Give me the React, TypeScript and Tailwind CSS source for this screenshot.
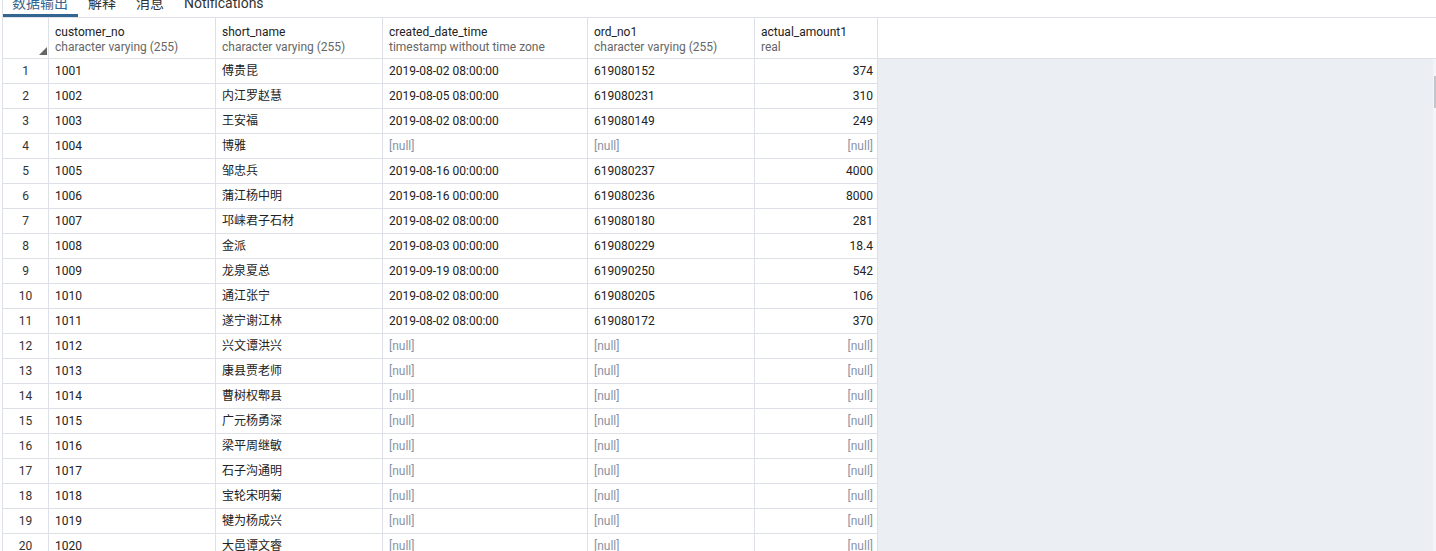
import React from "react";

type Row = [string, string, string | null, string | null, string | null];

const rows: Row[] = [
  ["1001", "傅贵昆", "2019-08-02 08:00:00", "619080152", "374"],
  ["1002", "内江罗赵慧", "2019-08-05 08:00:00", "619080231", "310"],
  ["1003", "王安福", "2019-08-02 08:00:00", "619080149", "249"],
  ["1004", "博雅", null, null, null],
  ["1005", "邹忠兵", "2019-08-16 00:00:00", "619080237", "4000"],
  ["1006", "蒲江杨中明", "2019-08-16 00:00:00", "619080236", "8000"],
  ["1007", "邛崃君子石材", "2019-08-02 08:00:00", "619080180", "281"],
  ["1008", "金派", "2019-08-03 00:00:00", "619080229", "18.4"],
  ["1009", "龙泉夏总", "2019-09-19 08:00:00", "619090250", "542"],
  ["1010", "通江张宁", "2019-08-02 08:00:00", "619080205", "106"],
  ["1011", "遂宁谢江林", "2019-08-02 08:00:00", "619080172", "370"],
  ["1012", "兴文谭洪兴", null, null, null],
  ["1013", "康县贾老师", null, null, null],
  ["1014", "曹树权郫县", null, null, null],
  ["1015", "广元杨勇深", null, null, null],
  ["1016", "梁平周继敏", null, null, null],
  ["1017", "石子沟通明", null, null, null],
  ["1018", "宝轮宋明菊", null, null, null],
  ["1019", "犍为杨成兴", null, null, null],
  ["1020", "大邑谭文睿", null, null, null],
];

const Null = () => <span className="text-[#8a93a5]">[null]</span>;

export default function App() {
  return (
    <div
      className="w-[1436px] h-[551px] overflow-hidden bg-white flex text-[12px] text-[#222]"
      style={{ fontFamily: 'Roboto, "Noto Sans CJK SC", sans-serif' }}
    >
      <div className="w-[2px] shrink-0 bg-white" />
      <div className="flex-1 min-w-0 border-l border-[#dde0e6] flex flex-col relative">
        {/* tab bar */}
        <div className="h-[18px] shrink-0 border-b border-[#dde0e6] flex items-stretch text-[14px] overflow-hidden">
          <div className="pl-[9px] pr-[10px] border-b-[3px] border-[#326690] text-[#326690]">
            <div className="-mt-[4px] leading-[14px]">数据输出</div>
          </div>
          <div className="px-[10px] text-[#333]">
            <div className="-mt-[4px] leading-[14px]">解释</div>
          </div>
          <div className="px-[10px] text-[#333]">
            <div className="-mt-[4px] leading-[14px]">消息</div>
          </div>
          <div className="px-[10px] text-[#333]">
            <div className="-mt-[4px] leading-[14px]">Notifications</div>
          </div>
        </div>

        {/* header */}
        <div className="h-[41px] shrink-0 flex border-b border-[#dde0e6]">
          <div className="w-[46px] shrink-0 border-r border-[#dde0e6] relative">
            <svg
              className="absolute right-[1px] bottom-[3px]"
              width="8"
              height="8"
              viewBox="0 0 8 8"
            >
              <polygon points="8,0 8,8 0,8" fill="#666" />
            </svg>
          </div>
          {[
            ["customer_no", "character varying (255)", "w-[167px]"],
            ["short_name", "character varying (255)", "w-[167px]"],
            ["created_date_time", "timestamp without time zone", "w-[205px]"],
            ["ord_no1", "character varying (255)", "w-[167px]"],
            ["actual_amount1", "real", "w-[123px]"],
          ].map(([n, t, w]) => (
            <div
              key={n}
              className={`${w} shrink-0 border-r border-[#dde0e6] pl-[6px] pt-[7px] leading-[15px] whitespace-nowrap overflow-hidden`}
            >
              <div className="text-[#222]">{n}</div>
              <div className="text-[#666]">{t}</div>
            </div>
          ))}
          <div className="flex-1 bg-white" />
        </div>

        {/* rows */}
        <div className="flex-1 flex flex-col bg-[#ebeef3]">
          {rows.map((r, i) => (
            <div key={i} className="h-[25px] shrink-0 flex leading-[24px] whitespace-nowrap">
              <div className="w-[46px] shrink-0 bg-white border-r border-b border-[#dde0e6] text-center text-[#333]">
                {i + 1}
              </div>
              <div className="w-[167px] shrink-0 bg-white border-r border-b border-[#dde0e6] pl-[6px]">
                {r[0]}
              </div>
              <div className="w-[167px] shrink-0 bg-white border-r border-b border-[#dde0e6] pl-[6px]">
                {r[1]}
              </div>
              <div className="w-[205px] shrink-0 bg-white border-r border-b border-[#dde0e6] pl-[6px]">
                {r[2] ?? <Null />}
              </div>
              <div className="w-[167px] shrink-0 bg-white border-r border-b border-[#dde0e6] pl-[6px]">
                {r[3] ?? <Null />}
              </div>
              <div className="w-[123px] shrink-0 bg-white border-r border-b border-[#dde0e6] pr-[4px] text-right">
                {r[4] ?? <Null />}
              </div>
            </div>
          ))}
        </div>

        {/* scrollbar */}
        <div className="absolute right-0 top-[59px] bottom-0 w-[3px] bg-[#f3f4f7]">
          <div className="absolute right-0 top-[17px] h-[32px] w-[2px] bg-[#c2c5cb]" />
        </div>
      </div>
    </div>
  );
}
